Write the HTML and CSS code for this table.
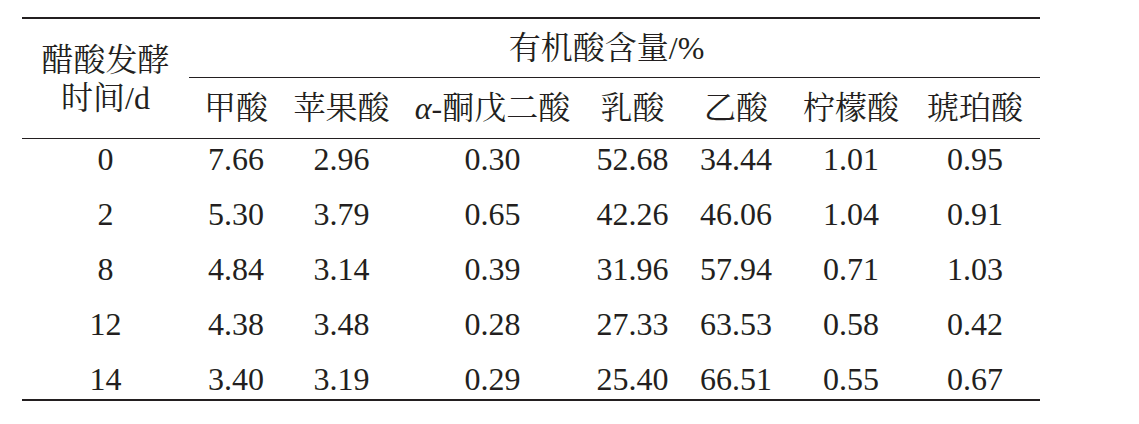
FILE: index.html
```html
<!DOCTYPE html>
<html lang="en">
<head>
    <meta charset="UTF-8">
    <meta name="viewport" content="width=device-width, initial-scale=1.0">
    <title>有机酸含量</title>
    <link rel="stylesheet" href="styles.css">
</head>
<body>
    <table class="acid-table">
        <colgroup>
            <col class="c-time">
            <col class="c-1">
            <col class="c-2">
            <col class="c-3">
            <col class="c-4">
            <col class="c-5">
            <col class="c-6">
            <col class="c-7">
        </colgroup>
        <thead>
            <tr class="head-top">
                <th rowspan="2" class="time-head">醋酸发酵<br>时间/d</th>
                <th colspan="7" class="group-head">有机酸含量/%</th>
            </tr>
            <tr class="head-sub">
                <th>甲酸</th>
                <th>苹果酸</th>
                <th><i>α</i>-酮戊二酸</th>
                <th>乳酸</th>
                <th>乙酸</th>
                <th>柠檬酸</th>
                <th>琥珀酸</th>
            </tr>
        </thead>
        <tbody>
            <tr>
                <td>0</td><td>7.66</td><td>2.96</td><td>0.30</td><td>52.68</td><td>34.44</td><td>1.01</td><td>0.95</td>
            </tr>
            <tr>
                <td>2</td><td>5.30</td><td>3.79</td><td>0.65</td><td>42.26</td><td>46.06</td><td>1.04</td><td>0.91</td>
            </tr>
            <tr>
                <td>8</td><td>4.84</td><td>3.14</td><td>0.39</td><td>31.96</td><td>57.94</td><td>0.71</td><td>1.03</td>
            </tr>
            <tr>
                <td>12</td><td>4.38</td><td>3.48</td><td>0.28</td><td>27.33</td><td>63.53</td><td>0.58</td><td>0.42</td>
            </tr>
            <tr>
                <td>14</td><td>3.40</td><td>3.19</td><td>0.29</td><td>25.40</td><td>66.51</td><td>0.55</td><td>0.67</td>
            </tr>
        </tbody>
    </table>
</body>
</html>
```

FILE: styles.css
```css
html, body {
    margin: 0;
    background: #fff;
}

body {
    color: #231f20;
    font-family: "Liberation Serif", "Noto Serif CJK SC", serif;
    font-size: 32px;
}

.acid-table {
    margin: 17px 0 0 22px;
    width: 1018px;
    table-layout: fixed;
    border-collapse: separate;
    border-spacing: 0;
    border-top: 2px solid #231f20;
    border-bottom: 2px solid #231f20;
}

.c-time { width: 167px; }
.c-1 { width: 94px; }
.c-2 { width: 117px; }
.c-3 { width: 185px; }
.c-4 { width: 95px; }
.c-5 { width: 112px; }
.c-6 { width: 118px; }
.c-7 { width: 130px; }

th, td {
    padding: 0;
    text-align: center;
    white-space: nowrap;
    font-weight: 400;
    font-family: "Liberation Serif", "Noto Serif CJK SC", serif;
}

th i {
    font-style: italic;
}

.time-head {
    line-height: 38px;
    vertical-align: middle;
    border-bottom: 1px solid #231f20;
}

.head-top .group-head {
    height: 58px;
    padding-right: 16px;
    line-height: 40px;
    border-bottom: 1px solid #231f20;
}

.head-sub th {
    height: 60px;
    line-height: 40px;
    border-bottom: 1px solid #231f20;
}

tbody td {
    line-height: 40px;
    padding: 0 0 15px;
}

tbody tr:last-child td {
    padding-bottom: 0;
}
```
